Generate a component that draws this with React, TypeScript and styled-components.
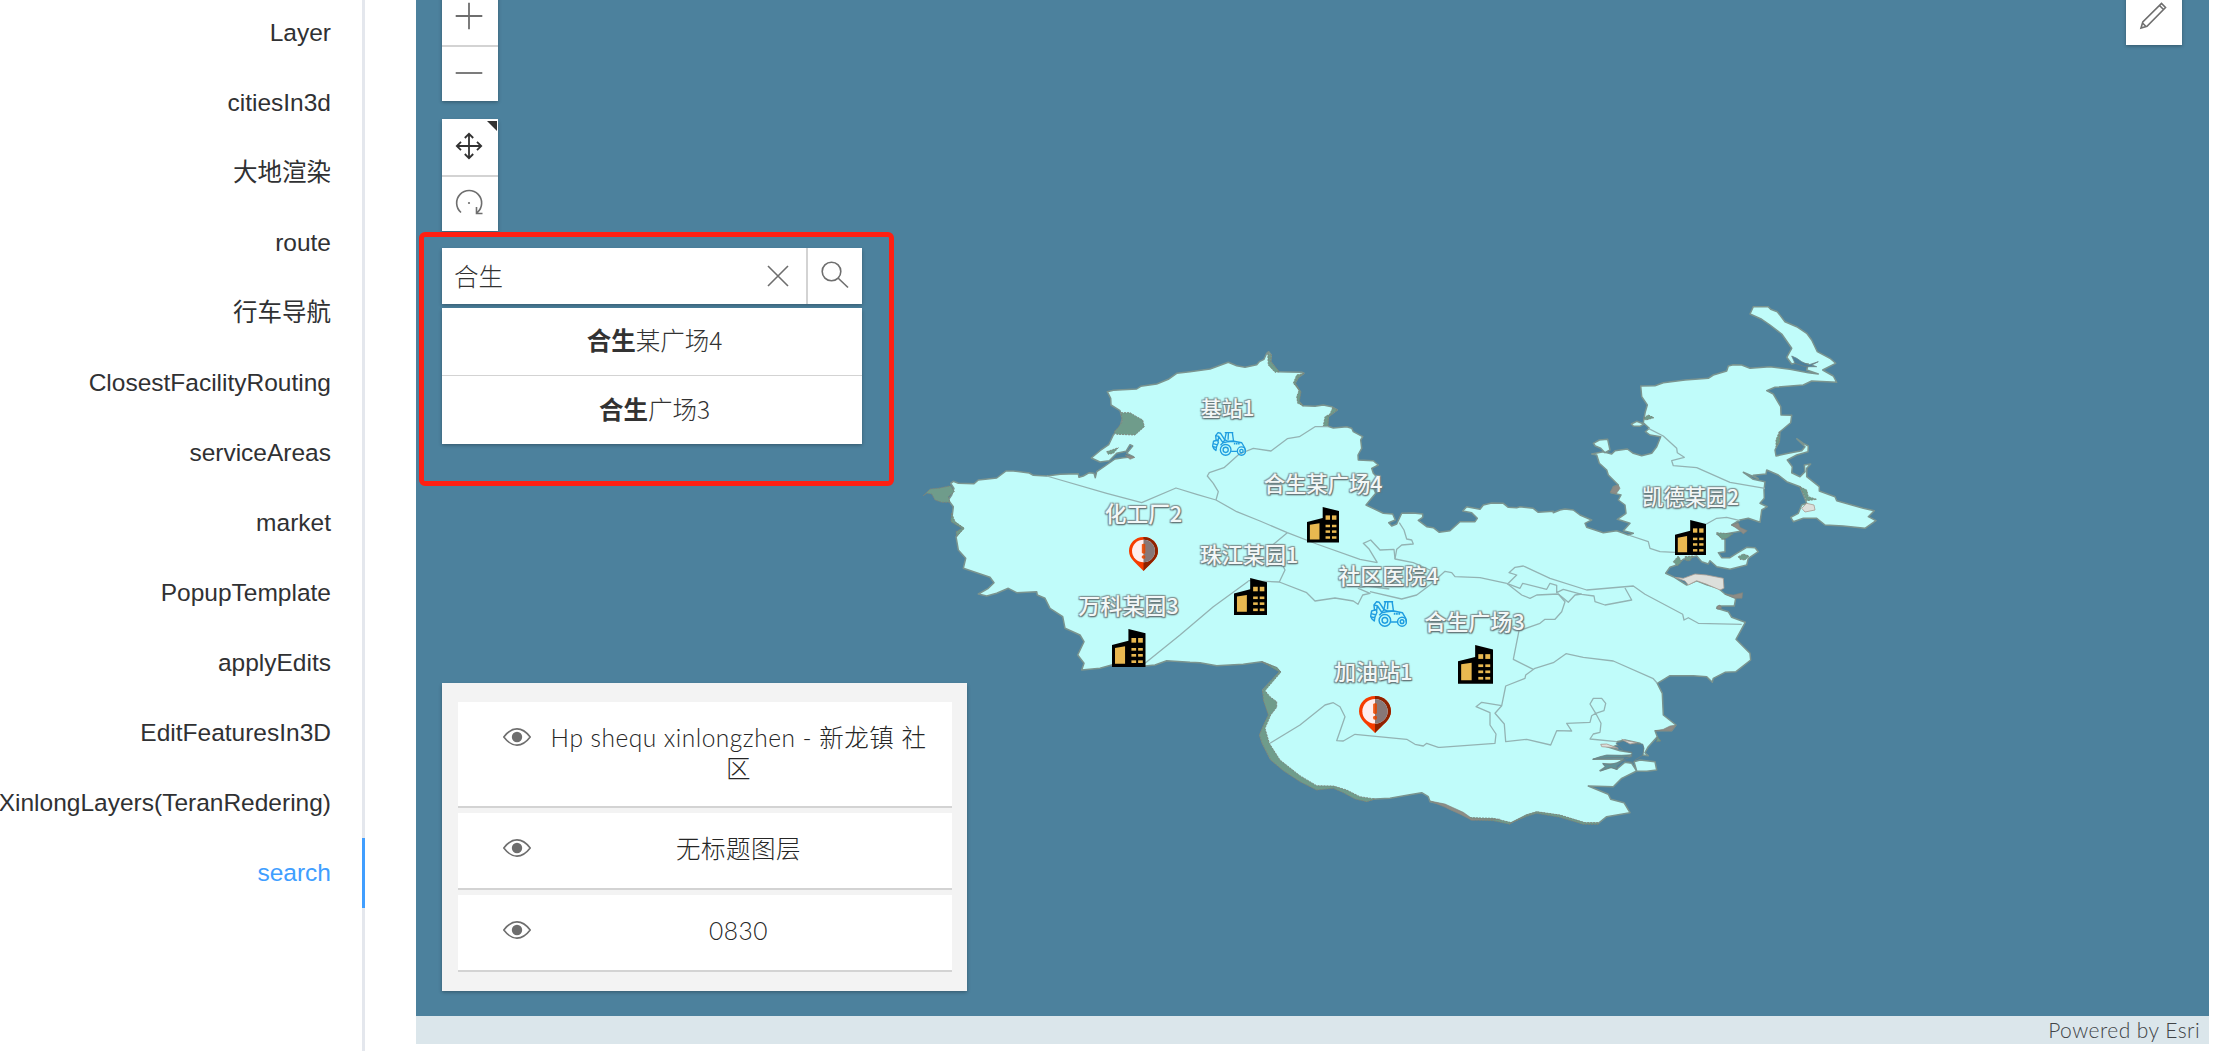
import React from 'react';
import styled, { createGlobalStyle } from 'styled-components';

const GlobalStyle = createGlobalStyle`
  * { box-sizing: border-box; }
  body { margin: 0; background: #fff; overflow: hidden; }
`;

const uiFont = `"Liberation Sans", "Noto Sans CJK SC", sans-serif`;
const esriFont = `Lato, "Noto Sans CJK SC", sans-serif`;

const Page = styled.div`
  display: flex;
  height: 1051px;
  overflow: hidden;
  font-family: ${uiFont};
`;

const Sidebar = styled.nav`
  display: flex;
  flex-direction: column;
  flex: none;
  width: 365px;
  margin-right: 51px;
  overflow: hidden;
  box-shadow: inset -3px 0 0 #e4e7ed;
`;

const Tabs = styled.div`
  display: flex;
  flex-direction: column;
  margin-top: -2px;
`;

const Tab = styled.div<{ $active: boolean }>`
  display: flex;
  flex: none;
  align-items: center;
  justify-content: flex-end;
  height: 70px;
  padding-right: 31px;
  border-right: 3px solid ${(p) => (p.$active ? '#409eff' : 'transparent')};
  color: ${(p) => (p.$active ? '#409eff' : '#303133')};
  font-size: 24.5px;
  line-height: 70px;
  white-space: nowrap;
`;

const MapColumn = styled.main`
  display: flex;
  flex-direction: column;
  width: 1793px;
  flex: none;
`;

const MapView = styled.section`
  position: relative;
  height: 1016px;
  overflow: hidden;
  background: #4c819d;
`;

const MapCanvas = styled.svg`
  display: block;
  width: 1793px;
  height: 1016px;
`;

const Attribution = styled.footer`
  display: flex;
  align-items: center;
  justify-content: flex-end;
  height: 28px;
  padding-right: 9px;
  background: #dbe6eb;
  color: #404346;
  font-family: ${esriFont};
  font-size: 21px;
  line-height: 27px;
  padding-bottom: 1px;
  letter-spacing: 0.45px;
  font-weight: 300;
`;

const TopLeft = styled.div`
  position: absolute;
  left: 26px;
  top: -11px;
  display: flex;
  flex-direction: column;
  align-items: flex-start;
`;

const shadow = '0 1.75px 3.5px rgba(0, 0, 0, 0.3)';

const ButtonGroup = styled.div<{ $gap: number }>`
  display: flex;
  flex-direction: column;
  width: 56px;
  margin-bottom: ${(p) => p.$gap}px;
  background: #fff;
  box-shadow: ${shadow};
`;

const ToolButton = styled.div<{ $divided?: boolean; $dark?: boolean }>`
  position: relative;
  display: flex;
  align-items: center;
  justify-content: center;
  width: 56px;
  height: 56px;
  padding-right: 2px;
  padding-bottom: 3px;
  border-top: ${(p) => (p.$divided ? '2px solid #d3d3d3' : '0')};
  background: #fff;
  color: ${(p) => (p.$dark ? '#323232' : '#6e6e6e')};
`;

const Corner = styled.i`
  position: absolute;
  top: 2px;
  right: 1px;
  border-top: 10px solid #323232;
  border-left: 10px solid transparent;
`;

const Icon = styled.svg`
  display: block;
  fill: none;
  stroke: currentColor;
`;

const SearchBox = styled.div`
  display: flex;
  width: 420px;
  height: 56px;
  background: #fff;
  box-shadow: ${shadow};
  color: #6e6e6e;
`;

const SearchInput = styled.div`
  flex: 1;
  padding-left: 12px;
  color: #323232;
  font-family: ${esriFont};
  font-size: 24.5px;
  font-weight: 300;
  line-height: 58px;
`;

const ClearButton = styled.div`
  display: flex;
  align-items: center;
  justify-content: center;
  width: 56px;
`;

const SubmitButton = styled(ClearButton)`
  border-left: 2px solid #d3d3d3;
  padding-bottom: 3px;
`;

const Suggestions = styled.div`
  display: flex;
  flex-direction: column;
  width: 420px;
  margin-top: 4px;
  background: #fff;
  box-shadow: ${shadow};
`;

const Suggestion = styled.div`
  display: flex;
  justify-content: center;
  height: 68px;
  padding-left: 5px;
  border-bottom: 1px solid #d3d3d3;
  color: #323232;
  font-family: "Noto Sans CJK SC", sans-serif;
  font-size: 24.5px;
  font-weight: 300;
  line-height: 64px;
  &:last-child { border-bottom: 0; line-height: 65px; }
  b { font-weight: 700; }
`;

const Highlight = styled.div`
  position: absolute;
  left: 3px;
  top: 232px;
  width: 475px;
  height: 254px;
  border: 5px solid #ff1f12;
  border-radius: 6px;
`;

const TopRight = styled.div`
  position: absolute;
  right: 27px;
  top: -11px;
`;

const LayerList = styled.div`
  position: absolute;
  left: 26px;
  top: 683px;
  display: flex;
  flex-direction: column;
  gap: 5px;
  width: 525px;
  height: 308px;
  padding: 19px 15px 19px 16px;
  background: #f3f3f3;
  box-shadow: ${shadow};
`;

const LayerItem = styled.div<{ $tall?: boolean }>`
  display: flex;
  flex: none;
  height: ${(p) => (p.$tall ? 106 : 77)}px;
  padding: 21px 19px 0 45px;
  border-bottom: 2px solid #d3d3d3;
  background: #fff;
  color: #6e6e6e;
`;

const EyeSlot = styled.div`
  flex: none;
  width: 41px;
  padding-top: 5px;
`;

const LayerTitle = styled.div`
  flex: 1;
  color: #262626;
  font-family: ${esriFont};
  font-size: 24.5px;
  font-weight: 300;
  line-height: 30.6px;
  letter-spacing: 0.5px;
  text-align: center;
`;

const MapPin = styled.div`
  position: absolute;
  display: flex;
  flex-direction: column;
  align-items: center;
  width: 0;
`;

const PinLabel = styled.span`
  height: 30px;
  color: #f3f7f7;
  font-family: "Noto Sans CJK SC", sans-serif;
  font-weight: 500;
  line-height: 30px;
  white-space: nowrap;
  text-shadow: 1px 1px 1px #64777a, -1px 1px 1px #7f9596, 1px -1px 1px #7f9596, -1px -1px 1px #8fa5a5, 0 1px 2px #6b8082;
`;

type Point = [number, number];

/* Survey tiles hold three units per map pixel, counted from the tile's corner. */
const tile = (x: number, y: number, coords: string): Point[] =>
  coords.trim().split(/\s+/).map((pair) => {
    const [px, py] = pair.split(',').map(Number);
    return [x + px / 3, y + py / 3];
  });
const west = (c: string) => tile(900, 340, c);
const centre = (c: string) => tile(1200, 340, c);
const north = (c: string) => tile(1540, 290, c);
const east = (c: string) => tile(1440, 560, c);
const south = (c: string) => tile(1200, 600, c);
const toPath = (pts: Point[], close = false) =>
  'M' + pts.map(([x, y]) => `${x.toFixed(1)} ${y.toFixed(1)}`).join('L') + (close ? 'Z' : '');

const coast: Point[] = [
  ...west('160,424 175,430 222,431 235,420 290,414 318,393 340,393 388,399 400,406 440,408 480,403 535,401 537,412 550,408 568,398 582,400 586,413 590,395 615,378 645,357 670,353 700,350 680,340 698,318 690,314 678,334 650,340 628,362 600,366 574,354 600,332 626,314 640,285 660,262 667,235 660,212 633,195 632,175 622,155 640,151 710,147 722,139 770,132 805,118 830,100 870,95 930,87 985,67'),
  ...centre('110,77 135,82 170,74 178,65 192,58 200,40 206,35 214,45 212,65 235,95 265,96 305,97 312,100 295,112 285,130 300,155 293,180 308,197 345,199 370,195 395,200 412,210 385,230 382,258 400,264 440,260 455,265 460,275 488,290 482,300 485,325 474,345 475,360 520,362 535,375 515,385 520,400 530,410 515,430 527,460 498,495 550,520 578,522 586,540 566,548 575,558 590,552 605,520 640,519 668,522 668,532 655,541 680,560 700,563 718,577 750,572 780,545 825,545 832,535 815,518 788,513 800,500 840,508 850,495 875,489 910,490 925,502 950,503 960,500 1000,505 1015,517 1060,514'),
  ...north('40,668 60,660 75,657 100,660 120,675 155,690 135,700 140,712 190,728 230,722 265,735 280,730 250,722 270,700 232,688 258,670 255,645 235,630 243,615 213,608 220,590 235,585 205,555 200,540 178,520 170,495 155,492 190,485 215,492 225,482 262,477 280,490 305,497 335,490 350,470 362,440 330,435 316,425 328,415 310,398 316,365 322,345 305,320 302,288 345,287 370,278 435,270 505,265 520,255 560,243 565,228 580,224 605,225 630,235 690,230 750,238 805,248 835,252 800,240 805,222 770,218 755,222 740,202 755,175 725,132 690,105 665,88 630,72 640,50 685,50 692,58 712,65 735,95 770,110 800,130 815,150 832,185 870,205 887,220 848,240 880,258 890,277 815,273 790,285 705,292 680,302 700,312 722,350 723,375 755,376 752,398 720,425 718,455 705,480 708,498 745,490 785,482 795,470 770,446 790,460 805,468 804,485 770,495 742,510 757,530 755,548 780,560 795,545 793,525 812,522 800,535 800,560 838,590 838,603 885,620 890,632 970,655 1003,662 985,680 1008,692 975,715 910,708 855,705 830,685 790,685 760,695 752,682 775,670 785,645 800,640 780,590 740,575 715,555 680,540 678,552 640,556 655,566 610,547 640,568 675,575 672,600 673,625 660,640 682,650 665,660 660,697 625,685 600,690 575,705 600,715 610,722 555,732 530,732 555,750 555,785 535,788 545,803 570,803 590,790 620,772 645,773 655,785 625,805 620,825 570,838 530,830 510,812 505,822 485,815 470,798 430,808 410,825 390,832 377,850 400,860 440,885 470,872 500,884 535,895 555,912 587,925 583,948'),
  ...east('835,138 830,145 865,155 875,172 916,187 888,238 930,280 932,300 888,335 855,337 820,355 817,367 800,350 760,347 690,347 652,370 667,400 670,465 708,495 695,512 645,512 652,530 625,560 615,578 625,587 608,585 610,560 600,550 555,540 530,545 545,550 520,560 485,555 540,572 578,578 575,588 500,588 460,598 550,597 530,612 490,612 498,620 480,632 515,622 530,628 555,607 575,610 590,633 545,655 520,680 445,678 505,703 512,718 552,728 570,758 500,770 475,790 435,790 360,767 290,757 260,765 210,790 160,778 90,775 60,760 25,745'),
  ...south('735,615 690,605 685,590 665,578 625,585 570,595 525,597 500,602 465,592 430,570 400,560 350,567 300,540 250,508 212,478 188,430 180,405 195,370 208,345 195,305 188,270 240,215 230,203 185,185 130,193 50,197 0,188'),
  ...west('870,967 800,962 765,975 735,978 635,975 600,985 545,990 552,970 533,945 552,905 540,885 495,865 488,830 450,805 435,775 412,765 410,755 350,758 325,745 290,760 260,768 235,762 265,745 282,728 270,712 190,685 197,655 175,630 168,590 190,565 155,540 160,500 145,480 155,465 162,445 152,430'),
];

const islands: Point[][] = [
  north('160,460 178,450 203,448 210,480 195,488 182,475 166,468'),
  north('274,402 290,394 312,402 300,409 280,408'),
  east('582,605 600,600 645,605 650,630 620,634 590,633'),
];

const scrub: Point[][] = [
  west('70,467 90,447 120,444 152,437 163,455 145,470 150,487 125,487 105,480 95,462 80,460'),
  west('663,218 690,218 710,230 728,240 733,260 705,285 650,283 642,275 655,262 667,245'),
  west('620,335 655,323 640,340 625,343'),
  west('155,520 165,545 193,565 180,578 170,590 168,575 186,565 153,545'),
  centre('203,40 214,45 212,65 238,95 225,97 205,75'),
  centre('312,100 295,112 285,130 303,155 298,185 310,197 293,190 290,170 298,150 280,130 290,105'),
  centre('398,203 412,210 385,230 384,260 370,258 375,230 390,222'),
  south('185,185 230,203 243,216 195,272 210,290 230,305 230,322 212,345 195,385 208,430 240,480 300,527 350,557 400,558 440,570 480,590 525,597 500,605 465,597 430,578 400,565 350,570 300,545 250,512 212,480 186,430 178,405 195,365 205,345 190,300 188,270 238,215'),
  east('210,790 260,765 290,755 360,765 435,788 475,788 475,793 430,793 360,772 290,760 260,769'),
  east('90,773 160,775 210,787 210,793 160,782 90,779'),
  north('310,385 325,375 342,383 318,390'),
  north('530,728 578,732 560,745 545,748'),
  north('595,800 610,792 627,798 615,810 600,808'),
  north('400,815 415,798 425,815 412,828'),
  north('780,590 800,600 805,620 830,628 800,632 790,610'),
  east('652,530 663,543 650,545'),
  north('718,425 718,455 708,470 708,450'),
  north('435,800 460,798 450,812 438,812'),
];

const soil: Point[][] = [
  north('220,590 235,585 240,595 228,612 210,607'),
  north('575,705 595,698 600,712 622,722 610,732 600,722'),
  north('555,912 580,915 608,908 606,925 585,925'),
  north('530,950 540,945 545,955 533,958'),
  east('690,498 708,495 695,513 645,512 670,508'),
  west('675,345 705,352 690,358'),
  south('690,603 735,612 790,637 815,655 900,658 815,661 785,645 735,622'),
];

const sand: Point[][] = [
  north('405,862 430,865 465,852 500,855 550,865 552,895 540,900 500,883 470,872 445,885 435,873'),
  north('785,655 800,640 822,645 825,660 795,666'),
  east('482,553 500,552 535,565 510,562 485,560'),
  east('545,538 560,542 590,548 570,552'),
];

const ponds: Point[][] = [
  north('755,198 770,205 785,215 805,225 835,215 815,225 830,230 795,230 765,220'),
  east('528,550 550,543 580,552 608,552 612,565 608,586 585,600 578,607 560,604 548,600 575,590 576,577 550,572'),
];

const shoals: Point[][] = [
  east('458,598 480,590 500,585 545,586 576,584 550,592 500,593'),
  east('488,610 510,614 530,608 552,600 530,618 532,628 510,622 482,633 496,620'),
];

const boundaries: Point[][] = [
  west('440,408 620,460 725,488 828,444 890,463 948,480'),
  centre('48,480 55,455 40,430 22,408 28,398 72,383 118,342 160,325 213,333 262,296 298,290 345,260 385,260'),
  centre('48,480 110,515 180,543 262,578 350,612 480,658 532,668'),
  centre('262,578 215,617 240,660 255,690 238,726 145,722'),
  west('735,970 840,885 940,800 1045,724'),
  centre('238,726 320,758 345,783 405,774 460,783 474,793 488,765 510,760 475,745 500,738 568,747'),
  centre('510,755 605,777 650,765 690,735 735,694 755,698 765,710 840,713 920,730'),
  centre('532,668 508,628 490,610 512,600 540,630 582,628 585,657 640,668 690,690'),
  centre('598,548 612,570 620,597 635,600 640,612 605,615 590,628 585,657'),
  east('205,70 230,45 207,38 225,22 250,18 330,55 440,90 580,78 615,103 728,163 732,180 745,173 775,190 905,193'),
  east('200,70 240,85 248,70 320,88 330,70 350,76 350,98 370,88 425,103 462,108 465,125 495,135 575,120 555,84'),
  east('200,70 245,105 270,115 290,105 355,102 375,125 365,155 345,178 315,178 300,190 237,212 220,298 280,328'),
  east('355,102 385,127 405,105 425,102'),
  east('652,370 640,356 520,303 430,292 378,281 340,308 285,325 257,345 255,355 197,378 185,437 165,460 193,492 197,545 260,538 332,555 350,512 395,513 380,490 450,487 455,467 467,460 450,432 460,415 485,415 497,430 492,452 467,460 483,490 480,517 460,522 450,537 530,545'),
  east('185,437 125,427 108,440 150,458 150,495 168,522 165,550 0,562'),
  south('210,430 300,375 375,315 400,308 420,320 435,350 410,422 430,423 465,403 620,418 645,433 670,438 680,430 715,442 720,442'),
  north('325,415 370,438 410,475 412,488 433,502 395,512 400,527 470,533 570,577 675,595'),
  north('265,735 325,755 330,775 360,785 405,787'),
  north('498,703 530,685 560,682 600,692'),
];

function IslandMap() {
  return (
    <MapCanvas viewBox="416 0 1793 1016">
      <g fill="#c0fcfa" stroke="#7b948f" strokeWidth="1.5" strokeLinejoin="round">
        <path d={toPath(coast, true)} />
        {islands.map((p, i) => <path key={i} d={toPath(p, true)} />)}
      </g>
      <g fill="#6f9c8b" stroke="#7d8279" strokeWidth="0.9" strokeDasharray="2 1">
        {scrub.map((p, i) => <path key={i} d={toPath(p, true)} />)}
      </g>
      <g fill="#8d8c86" stroke="#80847d" strokeWidth="0.6">
        {soil.map((p, i) => <path key={i} d={toPath(p, true)} />)}
      </g>
      <g fill="#4c819d" stroke="#6f8384" strokeWidth="0.8">
        {ponds.map((p, i) => <path key={i} d={toPath(p, true)} />)}
      </g>
      <g fill="#5f9196" stroke="#6f8384" strokeWidth="0.8">
        {shoals.map((p, i) => <path key={i} d={toPath(p, true)} />)}
      </g>
      <g fill="#dddfdb" stroke="#a79a90" strokeWidth="0.8">
        {sand.map((p, i) => <path key={i} d={toPath(p, true)} />)}
      </g>
      <g fill="none" stroke="#93b3b3" strokeWidth="1.3" strokeLinejoin="round">
        {boundaries.map((p, i) => <path key={i} d={toPath(p)} />)}
      </g>
    </MapCanvas>
  );
}

type Kind = 'building' | 'alert' | 'tractor';

function Building({ w, h }: { w: number; h: number }) {
  return (
    <svg width={w} height={h} viewBox="0 0 100 114" preserveAspectRatio="none">
      <path d="M0 114V48L49 35V0L100 13V114Z" fill="#000" />
      <path d="M9 57L39 52V104H9Z" fill="#e9b850" />
      <g fill="#e9b850">
        <rect x="58" y="27" width="14" height="14" /><rect x="78" y="27" width="14" height="14" />
        <rect x="58" y="57" width="14" height="8" /><rect x="78" y="57" width="14" height="8" />
        <rect x="58" y="75" width="14" height="8" /><rect x="78" y="75" width="14" height="8" />
        <rect x="58" y="94" width="14" height="8" /><rect x="78" y="94" width="14" height="8" />
      </g>
    </svg>
  );
}

function Alert({ w, h }: { w: number; h: number }) {
  return (
    <svg width={w} height={h} viewBox="0 0 86 102" preserveAspectRatio="none">
      <path d="M43 0C18 0 0 19 0 42C0 66 22 78 43 102C64 78 86 66 86 42C86 19 68 0 43 0Z" fill="#f63c00" />
      <path d="M43 0C68 0 86 19 86 42C86 66 64 78 43 102Z" fill="#8f2200" />
      <circle cx="43" cy="42" r="34" fill="#ffeeee" />
      <path d="M43 8A34 34 0 0 1 43 76Z" fill="#877777" />
      <path d="M38 22Q43 18 48 22V47Q43 52 38 47Z" fill="#f05a18" />
      <circle cx="43" cy="60" r="5.5" fill="#f05a18" />
      <path d="M43 20Q46 20 48 22V47Q46 50 43 50ZM43 54.5A5.5 5.5 0 0 1 43 65.5Z" fill="#d24c12" />
    </svg>
  );
}

function Tractor({ w, h }: { w: number; h: number }) {
  return (
    <svg width={w} height={h} viewBox="0 0 112 78" preserveAspectRatio="none" fill="none" stroke="#1f9de0" strokeWidth="4.4" strokeLinejoin="round">
      <path d="M42 2H70M47 2L42 25L52 30H71L67 2M54 4L53 25" />
      <path d="M28 43L36 35L50 32L72 30L98 35L108 52L110 64M63 63H82" />
      <path d="M14 30L12 12L20 2L28 4L43 27L35 33L22 14L20 30M12 12L22 14" />
      <path d="M5 30L18 26L21 34L15 48L13 60L6 54L2 46ZM4 38L18 42M4 48L15 50" />
      <circle cx="45" cy="58" r="17.5" /><circle cx="45" cy="58" r="8.5" />
      <circle cx="97" cy="62" r="13.5" /><circle cx="97" cy="62" r="5.5" />
      <path d="M72 38H92" strokeDasharray="5 2" strokeWidth="6" />
    </svg>
  );
}

const glyphs: Record<Kind, React.FC<{ w: number; h: number }>> = {
  building: Building,
  alert: Alert,
  tractor: Tractor,
};

/* x and y give a label's centre; iconX and iconTop place the symbol under it. */
const places: { name: string; kind: Kind; x: number; y: number; size: number; iconX: number; iconTop: number; w: number; h: number }[] = [
  { name: '基站1', kind: 'tractor', x: 1227.5, y: 409, size: 21, iconX: 1229, iconTop: 432, w: 34, h: 24 },
  { name: '合生某广场4', kind: 'building', x: 1323, y: 485, size: 21.3, iconX: 1323.3, iconTop: 507, w: 32, h: 35.5 },
  { name: '化工厂2', kind: 'alert', x: 1143.5, y: 515, size: 21.7, iconX: 1143.7, iconTop: 537, w: 29, h: 34 },
  { name: '珠江某园1', kind: 'building', x: 1249, y: 556, size: 21.5, iconX: 1250.2, iconTop: 578.3, w: 33, h: 37 },
  { name: '万科某园3', kind: 'building', x: 1128.5, y: 606, size: 22, iconX: 1129, iconTop: 629, w: 33.5, h: 38 },
  { name: '社区医院4', kind: 'tractor', x: 1388.5, y: 576, size: 22, iconX: 1388.7, iconTop: 601, w: 37, h: 26 },
  { name: '合生广场3', kind: 'building', x: 1474.5, y: 622, size: 22, iconX: 1475, iconTop: 645.3, w: 35, h: 38.7 },
  { name: '加油站1', kind: 'alert', x: 1373.3, y: 672, size: 22, iconX: 1375.2, iconTop: 696, w: 32, h: 37 },
  { name: '凯德某园2', kind: 'building', x: 1690.7, y: 498, size: 21.2, iconX: 1690.5, iconTop: 520, w: 31, h: 35.3 },
];

const tabs = ['Layer', 'citiesIn3d', '大地渲染', 'route', '行车导航', 'ClosestFacilityRouting', 'serviceAreas', 'market', 'PopupTemplate', 'applyEdits', 'EditFeaturesIn3D', 'XinlongLayers(TeranRedering)', 'search'];

function Eye() {
  return (
    <Icon width="28" height="18" viewBox="0 0 28 18" strokeWidth="1.6">
      <path d="M0.8 9C5 3.5 9 0.9 14 0.9S23 3.5 27.2 9C23 14.5 19 17.1 14 17.1S5 14.5 0.8 9Z" />
      <circle cx="14" cy="9" r="5.2" fill="currentColor" stroke="none" />
    </Icon>
  );
}

export default function App() {
  return (
    <Page>
      <GlobalStyle />
      <Sidebar>
        <Tabs>
          {tabs.map((t) => <Tab key={t} $active={t === 'search'}>{t}</Tab>)}
        </Tabs>
      </Sidebar>
      <MapColumn>
        <MapView>
          <IslandMap />
          {places.map((p) => {
            const Glyph = glyphs[p.kind];
            return (
              <React.Fragment key={p.name}>
                <MapPin style={{ left: p.x - 416, top: p.y - 17 }}>
                  <PinLabel style={{ fontSize: p.size }}>{p.name}</PinLabel>
                </MapPin>
                <MapPin style={{ left: p.iconX - 416, top: p.iconTop }}>
                  <Glyph w={p.w} h={p.h} />
                </MapPin>
              </React.Fragment>
            );
          })}

          <TopLeft>
            <ButtonGroup $gap={18}>
              <ToolButton>
                <Icon width="28" height="28" viewBox="0 0 28 28" strokeWidth="1.8"><path d="M0.7 14H27.3M14 0.7V27.3" /></Icon>
              </ToolButton>
              <ToolButton $divided>
                <Icon width="28" height="28" viewBox="0 0 28 28" strokeWidth="1.8"><path d="M0.7 14H27.3" /></Icon>
              </ToolButton>
            </ButtonGroup>
            <ButtonGroup $gap={17}>
              <ToolButton $dark>
                <Icon width="28" height="28" viewBox="0 0 28 28" strokeWidth="1.8">
                  <path d="M14 2V26M2 14H26M9.8 6L14 1.8L18.2 6M9.8 22L14 26.2L18.2 22M6 9.8L1.8 14L6 18.2M22 9.8L26.2 14L22 18.2" />
                </Icon>
                <Corner />
              </ToolButton>
              <ToolButton $divided>
                <Icon width="28" height="28" viewBox="0 0 28 28" strokeWidth="1.6">
                  <path d="M6 23.5A12.5 12.5 0 1 1 22.3 23.5M21.5 18V24.5H27.5" />
                  <circle cx="14" cy="14" r="1.1" fill="currentColor" stroke="none" />
                </Icon>
              </ToolButton>
            </ButtonGroup>
            <SearchBox>
              <SearchInput>合生</SearchInput>
              <ClearButton>
                <Icon width="22" height="22" viewBox="0 0 22 22" strokeWidth="1.6"><path d="M1 1L21 21M21 1L1 21" /></Icon>
              </ClearButton>
              <SubmitButton>
                <Icon width="28" height="28" viewBox="0 0 28 28" strokeWidth="1.6">
                  <circle cx="10.5" cy="10.5" r="9.3" /><path d="M17 17L27 26.5" />
                </Icon>
              </SubmitButton>
            </SearchBox>
            <Suggestions>
              <Suggestion><b>合生</b>某广场4</Suggestion>
              <Suggestion><b>合生</b>广场3</Suggestion>
            </Suggestions>
          </TopLeft>
          <Highlight />

          <TopRight>
            <ButtonGroup $gap={0}>
              <ToolButton>
                <Icon width="28" height="28" viewBox="0 0 28 28" strokeWidth="1.6">
                  <path d="M2 26L3.8 20L22.5 1.5L26.5 5.5L8 24.2ZM20.5 3.5L24.5 7.5M3.5 21L7 24.5" />
                </Icon>
              </ToolButton>
            </ButtonGroup>
          </TopRight>

          <LayerList>
            <LayerItem $tall>
              <EyeSlot><Eye /></EyeSlot>
              <LayerTitle>Hp shequ xinlongzhen - 新龙镇 社区</LayerTitle>
            </LayerItem>
            <LayerItem>
              <EyeSlot><Eye /></EyeSlot>
              <LayerTitle>无标题图层</LayerTitle>
            </LayerItem>
            <LayerItem>
              <EyeSlot><Eye /></EyeSlot>
              <LayerTitle>0830</LayerTitle>
            </LayerItem>
          </LayerList>
        </MapView>
        <Attribution>Powered by Esri</Attribution>
      </MapColumn>
    </Page>
  );
}
